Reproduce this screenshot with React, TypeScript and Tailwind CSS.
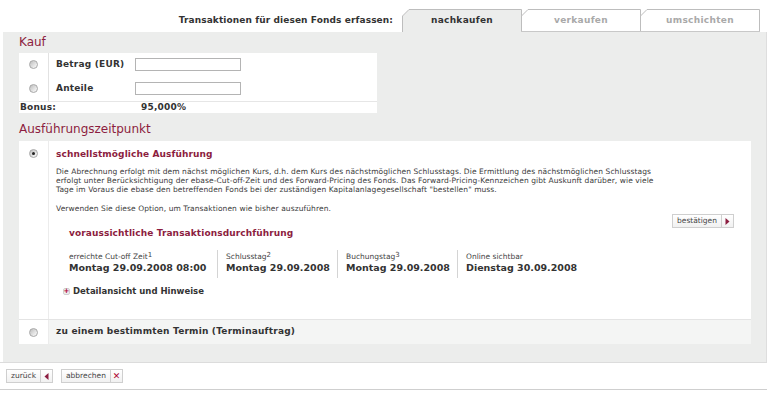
import React from "react";

const MAROON = "text-[#8c1d40]";

function Radio({ checked }: { checked?: boolean }) {
  return (
    <span className="relative inline-block w-[9px] h-[9px] rounded-full border border-[#a8a8a8] bg-linear-to-br from-[#bdbdbd] to-white">
      {checked && (
        <span className="absolute left-[2px] top-[2px] w-[3px] h-[3px] rounded-full bg-[#222]" />
      )}
    </span>
  );
}

function Tab({ label, active }: { label: string; active?: boolean }) {
  return (
    <div className="relative w-[120px] h-[23px] -ml-px first:ml-0 flex items-center justify-center">
      <svg className="absolute inset-0" width="120" height="23" viewBox="0 0 120 23">
        <path
          d="M0.5 23 L0.5 7 L7 0.5 L119.5 0.5 L119.5 23"
          fill={active ? "#ecedec" : "#ffffff"}
          stroke="#bdbdbd"
          strokeWidth="1"
        />
        {!active && <line x1="0" y1="22.5" x2="120" y2="22.5" stroke="#c8c8c8" strokeWidth="1" />}
      </svg>
      <span
        className={`relative text-[9px] font-bold tracking-[0.3px] ${
          active ? "text-[#333]" : "text-[#a9a9a9]"
        }`}
      >
        {label}
      </span>
    </div>
  );
}

function SmallButton({ label, icon }: { label: string; icon: React.ReactNode }) {
  return (
    <div className="flex h-[14px] border border-[#cfcfcf] bg-linear-to-b from-white to-[#f1f1f1] text-[7.5px] text-[#444]">
      <span className="px-[4px] flex items-center">{label}</span>
      <span className="w-[12px] border-l border-[#cfcfcf] flex items-center justify-center">{icon}</span>
    </div>
  );
}

function DateCol({
  label,
  sup,
  value,
  last,
  w,
}: {
  label: string;
  sup?: string;
  value: string;
  last?: boolean;
  w: string;
}) {
  return (
    <div className={`${w} flex flex-col pl-[8px] first:pl-0 h-[28px] ${last ? "" : "border-r border-[#d4d4d4]"}`}>
      <div className="text-[7.5px] leading-[10px] text-[#444] h-[12px] pt-[2px]">
        {label}
        {sup && <sup className="text-[7px] relative -top-[2px]">{sup}</sup>}
      </div>
      <div className="text-[9.5px] font-bold leading-[12px] text-[#333] whitespace-nowrap">{value}</div>
    </div>
  );
}

export default function App() {
  return (
    <div className="w-[770px] h-[394px] bg-white font-['DejaVu_Sans',Verdana,sans-serif] text-[#333] overflow-hidden">
      {/* header */}
      <div className="h-[32px] flex items-end justify-end pr-[10px]">
        <div className="text-[9px] font-bold text-[#333] mr-[9px] mb-[5px] tracking-[0.1px]">
          Transaktionen für diesen Fonds erfassen:
        </div>
        <div className="flex">
          <Tab label="nachkaufen" active />
          <Tab label="verkaufen" />
          <Tab label="umschichten" />
        </div>
      </div>

      {/* panel */}
      <div className="ml-[3px] w-[764px] h-[330px] bg-[#ecedec] border-r border-[#dedede] px-[16px] pt-[3px]">
        <div className={`${MAROON} text-[12px] leading-[15px] h-[18px]`}>Kauf</div>

        <div className="w-[358px] bg-white">
          <div className="flex h-[23px]">
            <div className="w-[29px] flex items-center justify-center">
              <Radio />
            </div>
            <div className="flex-1 border-l border-[#e2e2e2] flex items-center pl-[7px]">
              <span className="w-[79px] text-[9px] font-bold tracking-[0.2px]">Betrag (EUR)</span>
              <span className="w-[106px] h-[13px] border border-[#b4b4b4] bg-white" />
            </div>
          </div>
          <div className="flex h-[25px]">
            <div className="w-[29px] flex items-center justify-center">
              <Radio />
            </div>
            <div className="flex-1 border-l border-[#e2e2e2] flex items-center pl-[7px]">
              <span className="w-[79px] text-[9px] font-bold tracking-[0.2px]">Anteile</span>
              <span className="w-[106px] h-[13px] border border-[#b4b4b4] bg-white" />
            </div>
          </div>
          <div className="flex h-[12px] border-t border-[#e6e6e6] items-center text-[9px] font-bold leading-[11px] tracking-[0.2px]">
            <span className="w-[122px] pl-[1px]">Bonus:</span>
            <span>95,000%</span>
          </div>
        </div>

        <div className={`${MAROON} text-[12px] leading-[15px] mt-[9px] h-[19px]`}>
          Ausführungszeitpunkt
        </div>

        <div className="w-[732px] bg-white">
          {/* option 1 */}
          <div className="flex h-[178px]">
            <div className="w-[29px] flex justify-center pt-[8px]">
              <Radio checked />
            </div>
            <div className="flex-1 border-l border-[#ececec] pl-[7px] pr-[17px] pt-[7px]">
              <div className={`${MAROON} text-[9px] font-bold leading-[13px] tracking-[0.1px]`}>
                schnellstmögliche Ausführung
              </div>
              <div className="mt-[6px] text-[7.5px] leading-[9px] text-[#3a3a3a] whitespace-nowrap tracking-[0.085px]">
                Die Abrechnung erfolgt mit dem nächst möglichen Kurs, d.h. dem Kurs des nächstmöglichen Schlusstags. Die Ermittlung des nächstmöglichen Schlusstags
                <br />
                erfolgt unter Berücksichtigung der ebase-Cut-off-Zeit und des Forward-Pricing des Fonds. Das Forward-Pricing-Kennzeichen gibt Auskunft darüber, wie viele
                <br />
                Tage im Voraus die ebase den betreffenden Fonds bei der zuständigen Kapitalanlagegesellschaft "bestellen" muss.
              </div>
              <div className="mt-[10px] text-[7.5px] leading-[9px] text-[#3a3a3a] tracking-[0.085px]">
                Verwenden Sie diese Option, um Transaktionen wie bisher auszuführen.
              </div>
              <div className="flex justify-end mt-[1px]">
                <SmallButton
                  label="bestätigen"
                  icon={
                    <svg width="5" height="7" viewBox="0 0 5 7">
                      <path d="M0.5 0 L4.5 3.5 L0.5 7 Z" fill="#8c1d40" />
                    </svg>
                  }
                />
              </div>
              <div className="pl-[13px]">
                <div className={`${MAROON} text-[9px] font-bold leading-[13px] -mt-[1px] tracking-[0.1px]`}>
                  voraussichtliche Transaktionsdurchführung
                </div>
                <div className="flex mt-[10px]">
                  <DateCol w="w-[149px]" label="erreichte Cut-off Zeit" sup="1" value="Montag 29.09.2008 08:00" />
                  <DateCol w="w-[120px]" label="Schlusstag" sup="2" value="Montag 29.09.2008" />
                  <DateCol w="w-[120px]" label="Buchungstag" sup="3" value="Montag 29.09.2008" />
                  <DateCol w="w-[130px]" label="Online sichtbar" value="Dienstag 30.09.2008" last />
                </div>
                <div className="flex items-center -ml-[6px] mt-[7px]">
                  <span className="w-[7px] h-[7px] rounded-[2px] bg-[#ececec] border border-[#d0d0d0] flex items-center justify-center mr-[3px]">
                    <span className="text-[#b00030] text-[7px] leading-[7px] font-bold">+</span>
                  </span>
                  <span className="text-[8.5px] font-bold text-[#333]">Detailansicht und Hinweise</span>
                </div>
              </div>
            </div>
          </div>
          {/* option 2 */}
          <div className="flex h-[25px] bg-[#f4f5f4] border-t border-[#e4e4e4]">
            <div className="w-[29px] flex items-center justify-center bg-white">
              <Radio />
            </div>
            <div className="flex-1 border-l border-[#ececec] pl-[7px] flex items-center text-[9px] font-bold tracking-[0.2px]">
              zu einem bestimmten Termin (Terminauftrag)
            </div>
          </div>
        </div>
      </div>

      {/* footer */}
      <div className="w-[767px] border-t border-[#dcdcdc] h-[28px] flex items-center pl-[6px] gap-[8px] border-b border-b-[#cfcfcf]">
        <SmallButton
          label="zurück"
          icon={
            <svg width="5" height="7" viewBox="0 0 5 7">
              <path d="M4.5 0 L0.5 3.5 L4.5 7 Z" fill="#8c1d40" />
            </svg>
          }
        />
        <SmallButton
          label="abbrechen"
          icon={<span className="text-[#b00030] text-[9px] leading-[9px] font-bold">✕</span>}
        />
      </div>
    </div>
  );
}
